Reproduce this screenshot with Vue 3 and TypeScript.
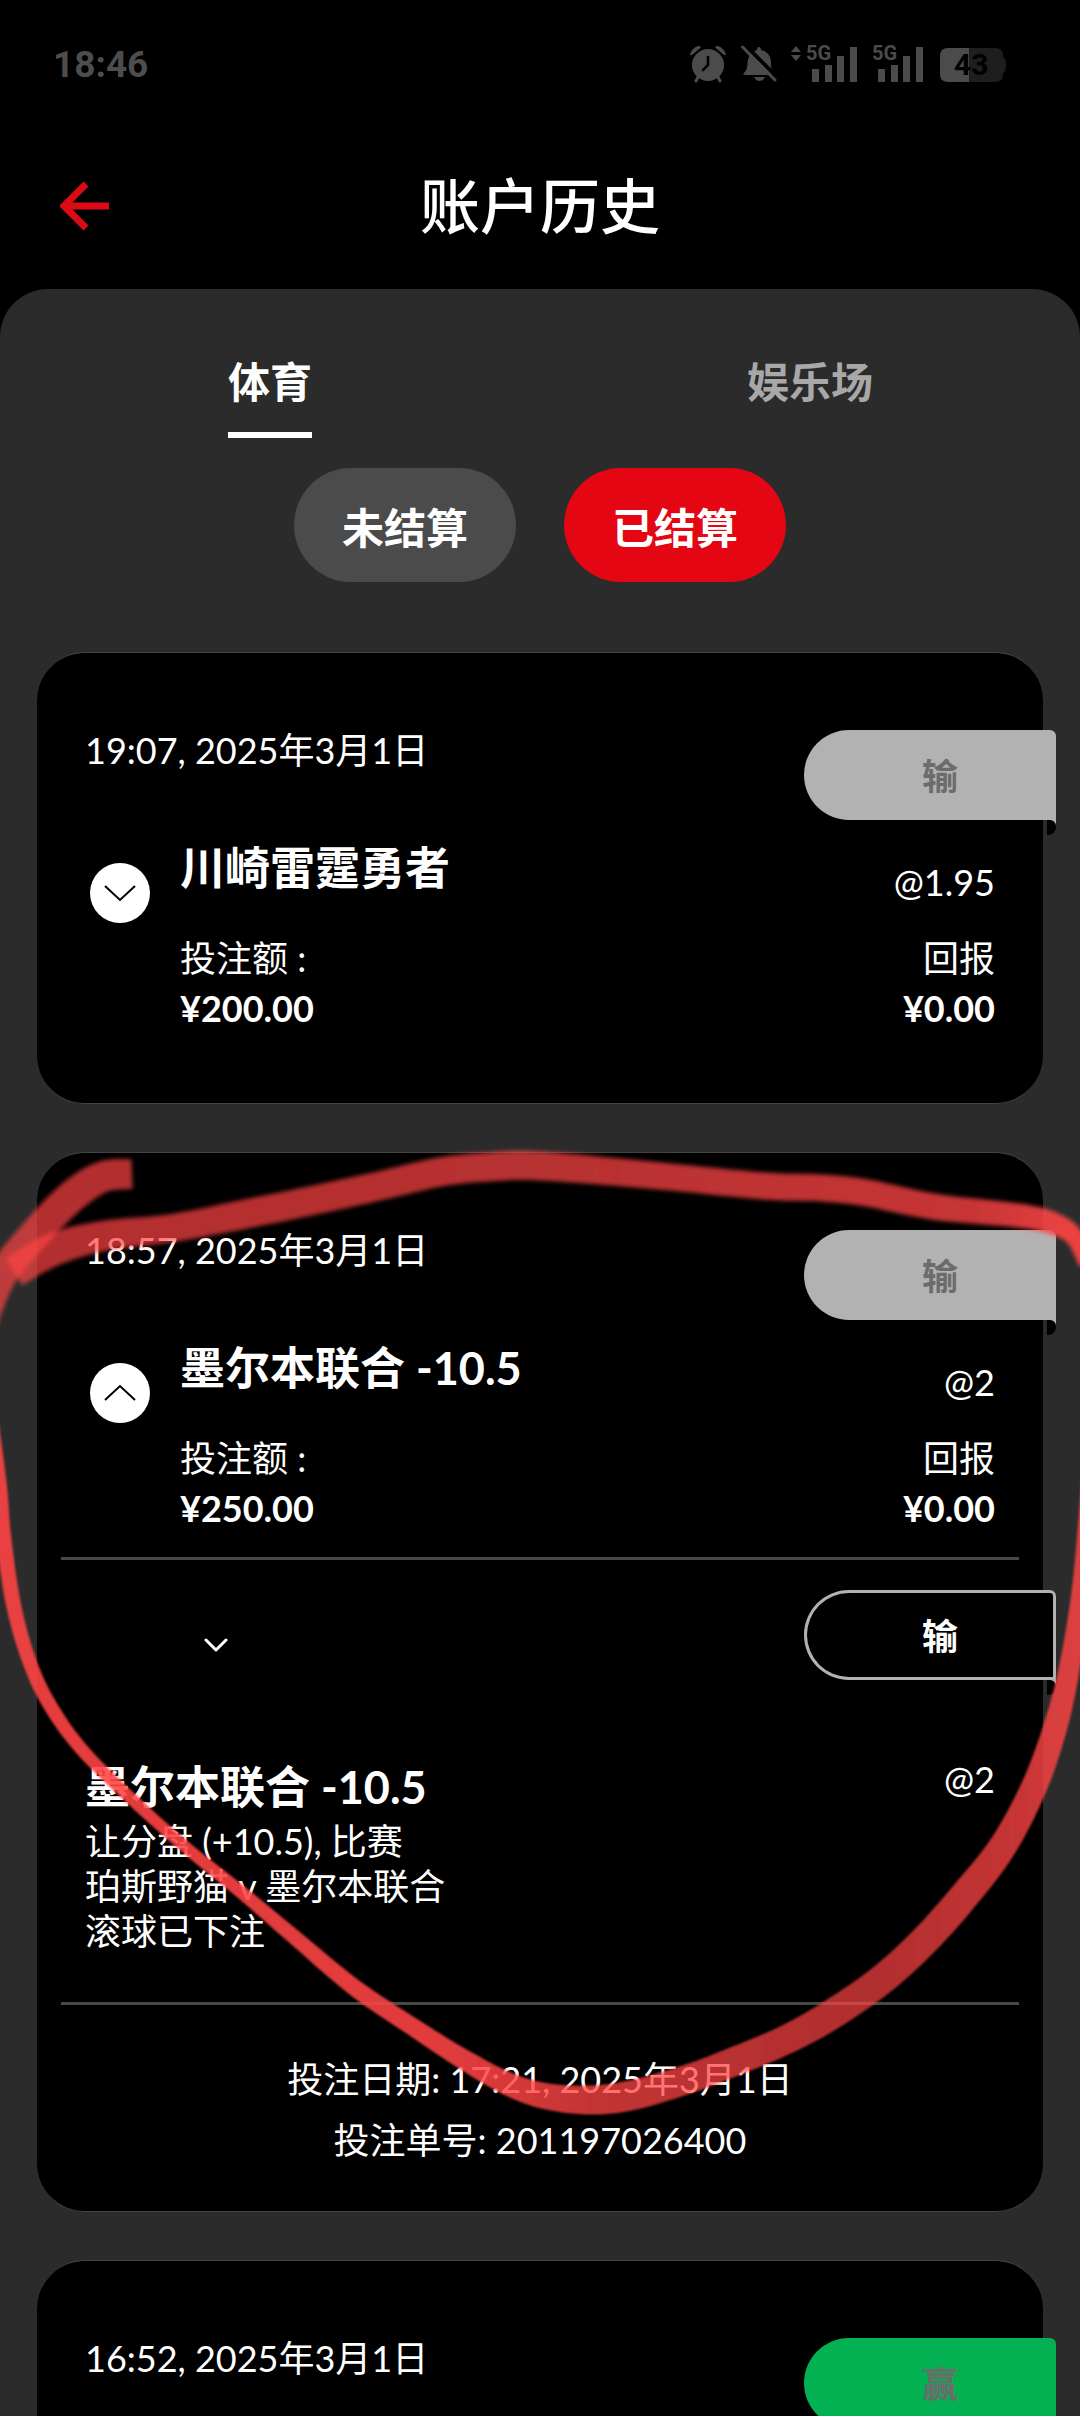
<script setup lang="ts">
import { ref } from 'vue'

interface BetDetail {
  name: string
  odds: string
  lines: string[]
  placed: string
  betId: string
}

interface Bet {
  date: string
  result: string
  tone: 'lost' | 'won'
  name?: string
  odds?: string
  stake?: string
  returns?: string
  open?: boolean
  marked?: boolean
  detail?: BetDetail
}

const tabs = ['体育', '娱乐场']
const filters = ['未结算', '已结算']
const activeTab = ref(0)
const activeFilter = ref(1)

const bets = ref<Bet[]>([
  {
    date: '19:07, 2025年3月1日',
    result: '输',
    tone: 'lost',
    name: '川崎雷霆勇者',
    odds: '@1.95',
    stake: '¥200.00',
    returns: '¥0.00',
  },
  {
    date: '18:57, 2025年3月1日',
    result: '输',
    tone: 'lost',
    name: '墨尔本联合 -10.5',
    odds: '@2',
    stake: '¥250.00',
    returns: '¥0.00',
    open: true,
    marked: true,
    detail: {
      name: '墨尔本联合 -10.5',
      odds: '@2',
      lines: ['让分盘 (+10.5), 比赛', '珀斯野猫 v 墨尔本联合', '滚球已下注'],
      placed: '17:21, 2025年3月1日',
      betId: '201197026400',
    },
  },
  { date: '16:52, 2025年3月1日', result: '赢', tone: 'won' },
])

// A pen sample: x, y and the stroke's thickness there.
type Sample = [number, number, number]

const tail: Sample[] = [
  [132, 1174, 30], [102, 1177, 31], [70, 1198, 32], [33, 1236, 31], [4, 1272, 30], [-9, 1303, 27], [-18, 1335, 24],
]
const over: Sample[] = [
  [14, 1272, 31], [52, 1250, 33], [103, 1236, 30], [172, 1228, 28], [241, 1215, 29], [310, 1201, 29],
  [379, 1186, 29], [440, 1172, 29], [489, 1167, 29], [540, 1166, 29], [660, 1176, 27], [764, 1186, 27],
  [822, 1188, 27], [867, 1193, 27], [936, 1207, 26], [1022, 1216, 24], [1057, 1225, 22], [1075, 1238, 18],
  [1086, 1264, 14],
]
const under: Sample[] = [
  [-8, 1425, 14], [0, 1487, 14], [4, 1540, 15], [14, 1607, 15], [30, 1663, 14], [51, 1707, 14], [84, 1752, 13],
  [138, 1805, 12], [189, 1850, 12], [241, 1892, 13], [293, 1936, 15], [355, 1988, 17], [413, 2027, 18],
  [458, 2056, 20], [506, 2083, 23], [545, 2096, 26], [590, 2100, 29], [633, 2095, 30], [691, 2078, 29],
  [733, 2062, 29], [781, 2042, 29], [826, 2018, 30], [880, 1981, 30], [925, 1940, 30], [965, 1895, 30],
  [1003, 1846, 28], [1034, 1787, 26], [1055, 1728, 24], [1069, 1670, 21], [1081, 1592, 19], [1088, 1500, 16],
  [1089, 1440, 12],
]

/** Runs a Catmull-Rom spline through the samples and returns the outline of the ribbon round it. */
function ribbon(points: Sample[]): string {
  const line: Sample[] = []
  const steps = 8
  for (let i = 0; i < points.length - 1; i++) {
    const p = [points[Math.max(i - 1, 0)], points[i], points[i + 1], points[Math.min(i + 2, points.length - 1)]]
    for (let s = 0; s < steps; s++) {
      const t = s / steps
      line.push(
        [0, 1, 2].map(
          (k) =>
            0.5 *
            (2 * p[1][k] +
              (p[2][k] - p[0][k]) * t +
              (2 * p[0][k] - 5 * p[1][k] + 4 * p[2][k] - p[3][k]) * t * t +
              (3 * p[1][k] - p[0][k] - 3 * p[2][k] + p[3][k]) * t * t * t),
        ) as Sample,
      )
    }
  }
  line.push(points[points.length - 1])
  const a: string[] = []
  const b: string[] = []
  line.forEach(([x, y, w], i) => {
    const from = line[Math.max(i - 1, 0)]
    const to = line[Math.min(i + 1, line.length - 1)]
    const dx = to[0] - from[0]
    const dy = to[1] - from[1]
    const r = w / 2 / (Math.hypot(dx, dy) || 1)
    a.push(`${(x - dy * r).toFixed(1)} ${(y + dx * r).toFixed(1)}`)
    b.unshift(`${(x + dy * r).toFixed(1)} ${(y - dx * r).toFixed(1)}`)
  })
  return `M${a.concat(b).join('L')}Z`
}

const tailPath = ribbon(tail)
const overPath = ribbon(over)
const underPath = ribbon(under)
</script>

<template>
  <div class="screen">
    <div class="status">
      <span class="clock">18:46</span>
      <div class="status-icons">
        <svg class="alarm" width="38" height="38" viewBox="0 0 38 38">
          <circle cx="19" cy="20" r="16" fill="#4b4b4b" />
          <path d="M1 9.500A13 13 0 0 1 9 1Q11.500 .5 12 2.500L3.500 9.500Q1.500 11 1 9.500ZM37 9.500A13 13 0 0 0 29 1Q26.500 .5 26 2.500L34.500 9.500Q36.500 11 37 9.500Z" fill="#4b4b4b" />
          <path d="M9 32l-2 4M29 32l2 4" stroke="#4b4b4b" stroke-width="3" stroke-linecap="round" />
          <path d="M19 12v8l-5 5" fill="none" stroke="#000" stroke-width="2.500" stroke-linecap="round" />
        </svg>
        <svg class="bell" width="36" height="38" viewBox="0 0 36 38">
          <path d="M18 2q2 0 2 3c7 2 10 6 10 13 0 6 1 9 4 12H4c-2 0-2-1-1-2 4-4 3-8 4-13Q8 7 16 5q0-3 2-3Z" fill="#4b4b4b" />
          <path d="M13 32h11q-2 4-5.500 4T13 32Z" fill="#4b4b4b" />
          <path d="M3 -1L38 34" stroke="#000" stroke-width="4" />
          <path d="M1.500 2L34 35" stroke="#4b4b4b" stroke-width="3" stroke-linecap="round" />
        </svg>
        <svg class="signal" width="67" height="54" viewBox="0 -8 67 54">
          <path d="M0 7l5-6 5 6ZM0 10h10l-5 6Z" fill="#4b4b4b" />
          <text x="15" y="15" class="net">5G</text>
          <path d="M21 24h7v13h-7ZM34 20h7v17h-7ZM46 11h7v26h-7ZM59 2h7v35h-7Z" fill="#4b4b4b" />
        </svg>
        <svg class="signal" width="52" height="54" viewBox="0 -8 52 54">
          <text x="0" y="15" class="net">5G</text>
          <path d="M6 24h7v13H6ZM19 20h7v17h-7ZM31 11h7v26h-7ZM44 2h7v35h-7Z" fill="#4b4b4b" />
        </svg>
        <svg class="battery" width="66" height="38" viewBox="0 0 66 38">
          <path d="M29 3h26q8 0 8 8v1q3 1 3 8t-3 8v1q0 8-8 8H29Z" fill="#1e1e1e" />
          <path d="M29 3H8Q0 3 0 11v18q0 8 8 8h21Z" fill="#4b4b4b" />
          <text x="14" y="30" class="level">43</text>
        </svg>
      </div>
    </div>

    <header class="top">
      <button class="back" aria-label="返回">
        <svg width="50" height="50" viewBox="0 0 50 50">
          <path d="M49 25H7M26 3L4 25l22 22" fill="none" stroke="#db0a15" stroke-width="7" />
        </svg>
      </button>
      <h1>账户历史</h1>
    </header>

    <main class="panel">
      <nav class="tabs">
        <button
          v-for="(tab, i) in tabs"
          :key="tab"
          class="tab"
          :class="{ active: i === activeTab }"
          @click="activeTab = i"
        >
          <span>{{ tab }}</span>
        </button>
      </nav>
      <div class="filters">
        <button
          v-for="(item, i) in filters"
          :key="item"
          class="pill"
          :class="{ active: i === activeFilter }"
          @click="activeFilter = i"
        >
          {{ item }}
        </button>
      </div>

      <section class="list">
        <article v-for="bet in bets" :key="bet.date" class="card">
          <div class="head">
            <time>{{ bet.date }}</time>
            <span class="badge" :class="bet.tone">{{ bet.result }}</span>
          </div>
          <div v-if="bet.name" class="body" :class="{ open: bet.open }">
            <button class="toggle" aria-label="展开或收起" @click="bet.open = !bet.open">
              <svg width="32" height="18" viewBox="0 0 32 18">
                <path :d="bet.open ? 'M1 16L16 2l15 14' : 'M1 2l15 14L31 2'" fill="none" stroke="#000" stroke-width="2" />
              </svg>
            </button>
            <div class="left">
              <h2>{{ bet.name }}</h2>
              <div class="amount">投注额 :<strong>{{ bet.stake }}</strong></div>
            </div>
            <div class="right">
              <span class="odds">{{ bet.odds }}</span>
              <div class="amount">回报<strong>{{ bet.returns }}</strong></div>
            </div>
          </div>
          <template v-if="bet.open && bet.detail">
            <hr />
            <div class="leg-head">
              <button class="leg-toggle" aria-label="详情">
                <svg width="24" height="16" viewBox="0 0 24 16">
                  <path d="M2 2l10 10L22 2" fill="none" stroke="#fff" stroke-width="3" stroke-linecap="round" stroke-linejoin="round" />
                </svg>
              </button>
              <span class="badge outline">{{ bet.result }}</span>
            </div>
            <div class="leg">
              <div>
                <h2>{{ bet.detail.name }}</h2>
                <p v-for="line in bet.detail.lines" :key="line">{{ line }}</p>
              </div>
              <span class="odds">{{ bet.detail.odds }}</span>
            </div>
            <hr />
            <footer class="meta">
              <span>投注日期: {{ bet.detail.placed }}</span>
              <span>投注单号: {{ bet.detail.betId }}</span>
            </footer>
          </template>

          <!-- freehand marker ring around the bet -->
          <svg v-if="bet.marked" class="marker" viewBox="0 1152 1080 980" aria-hidden="true">
            <defs>
              <linearGradient id="ink-under" gradientUnits="userSpaceOnUse" x1="0" y1="0" x2="1080" y2="0">
                <stop offset="0" stop-color="#ff4444" stop-opacity=".9" />
                <stop offset=".42" stop-color="#ff4444" stop-opacity=".88" />
                <stop offset=".56" stop-color="#ff4444" stop-opacity=".76" />
                <stop offset=".8" stop-color="#ff4444" stop-opacity=".69" />
                <stop offset=".92" stop-color="#ff4444" stop-opacity=".76" />
                <stop offset="1" stop-color="#ff4444" stop-opacity=".84" />
              </linearGradient>
              <linearGradient id="ink-over" gradientUnits="userSpaceOnUse" x1="0" y1="0" x2="1080" y2="0">
                <stop offset="0" stop-color="#ff4444" stop-opacity=".7" />
                <stop offset=".5" stop-color="#ff4444" stop-opacity=".72" />
                <stop offset=".9" stop-color="#ff4444" stop-opacity=".78" />
                <stop offset="1" stop-color="#ff4444" stop-opacity=".92" />
              </linearGradient>
              <filter id="soft" x="-5%" y="-5%" width="110%" height="110%">
                <feGaussianBlur stdDeviation="2" />
              </filter>
              <filter id="crisp" x="-5%" y="-5%" width="110%" height="110%">
                <feGaussianBlur stdDeviation="1" />
              </filter>
            </defs>
            <path :d="tailPath" fill="#ff4444" fill-opacity=".7" filter="url(#soft)" />
            <path :d="overPath" fill="url(#ink-over)" filter="url(#soft)" />
            <path :d="underPath" fill="url(#ink-under)" filter="url(#crisp)" />
          </svg>
        </article>
      </section>
    </main>
  </div>
</template>

<style>
html,
body {
  background: #000;
}
body {
  margin: 0;
}
</style>

<style scoped>
.screen {
  display: flex;
  flex-direction: column;
  height: 100vh;
  overflow: hidden;
  background: #000;
  color: #fff;
  font-family: Lato, 'Noto Sans CJK SC', sans-serif;
  font-size: 36px;
}
button {
  padding: 0;
  border: 0;
  background: none;
  color: inherit;
  font: inherit;
  cursor: pointer;
}
svg {
  display: block;
}
h1,
h2,
p {
  margin: 0;
}
.status {
  display: flex;
  flex: none;
  align-items: center;
  justify-content: space-between;
  height: 128px;
  padding: 0 74px 0 53px;
  font-family: Roboto, sans-serif;
  font-weight: 700;
}
.clock {
  color: #4d4d4d;
  font-size: 37px;
}
.status-icons {
  display: flex;
  align-items: center;
}
.bell,
.signal {
  margin-left: 14px;
}
.battery {
  margin-left: 16px;
}
.net {
  fill: #4b4b4b;
  font-size: 20px;
}
.level {
  fill: #000;
  font-size: 30px;
}
.top {
  display: grid;
  flex: none;
  box-sizing: border-box;
  grid-template-columns: 1fr auto 1fr;
  align-items: center;
  height: 161px;
  padding: 0 60px 6px;
}
.back {
  width: 50px;
  height: 50px;
}
h1 {
  font-size: 60px;
  font-weight: 500;
  line-height: 80px;
}
.panel {
  flex: 1;
  min-height: 0;
  overflow: hidden;
  border-radius: 48px 48px 0 0;
  background: #2b2b2b;
}
.tabs {
  display: flex;
  padding-top: 63px;
}
.tab {
  flex: 1;
  color: #a8a8a8;
  font-size: 42px;
  font-weight: 700;
  line-height: 60px;
}
.tab span {
  display: inline-block;
  padding-bottom: 20px;
  border-bottom: 6px solid transparent;
}
.tab.active {
  color: #fff;
}
.tab.active span {
  border-color: #fff;
}
.filters {
  display: flex;
  justify-content: center;
  gap: 48px;
  margin-top: 30px;
}
.pill {
  padding: 30px 48px 24px;
  border-radius: 57px;
  background: #4b4b4b;
  font-size: 42px;
  font-weight: 700;
  line-height: 60px;
}
.pill.active {
  background: #e40612;
}
.list {
  display: flex;
  flex-direction: column;
  gap: 48px;
  padding: 70px 37px 48px;
}
.card {
  position: relative;
  min-height: 450px;
  border: solid #444;
  border-width: 1px 0;
  border-radius: 48px;
  background: #000;
}
.head,
.leg-head {
  display: flex;
  align-items: flex-start;
  justify-content: space-between;
  margin-right: -13px;
  padding-left: 48px;
}
.head {
  padding-top: 77px;
}
.head time {
  line-height: 40px;
}
.badge {
  position: relative;
  box-sizing: border-box;
  width: 252px;
  height: 90px;
  padding-left: 20px;
  border-radius: 45px 6px 0 45px;
  background: #b2b2b2;
  color: #6c6c6c;
  font-weight: 700;
  line-height: 92px;
  text-align: center;
}
.badge::before,
.badge::after {
  position: absolute;
  top: 100%;
  right: 0;
  width: 9px;
  height: 6px;
  background: #b2b2b2;
  content: '';
}
.badge::after {
  height: 15px;
  border-radius: 0 6px 8px 0;
  background: #000;
}
.badge.won {
  background: #03b153;
}
.badge.won::before {
  background: #03b153;
}
.badge.outline {
  background: #000;
  box-shadow: inset 0 0 0 3px #b2b2b2;
  color: #fff;
}
.body {
  display: flex;
  padding: 21px 48px 70px;
}
.body.open {
  padding-bottom: 24px;
}
.toggle {
  display: flex;
  flex: none;
  align-items: center;
  justify-content: center;
  width: 60px;
  height: 60px;
  margin: 22px 30px 0 5px;
  border-radius: 50%;
  background: #fff;
}
.left,
.right {
  display: flex;
  flex-direction: column;
  justify-content: space-between;
}
.left {
  flex: 1;
  gap: 38px;
}
.right {
  padding-top: 14px;
  text-align: right;
}
h2 {
  font-size: 45px;
  font-weight: 700;
  line-height: 54px;
}
.odds {
  line-height: 54px;
}
.amount {
  line-height: 50px;
}
.amount strong {
  display: block;
}
hr {
  height: 3px;
  margin: 0 24px;
  border: 0;
  background: #484848;
}
.leg-head {
  padding-top: 30px;
}
.leg-toggle {
  display: flex;
  align-items: center;
  justify-content: center;
  width: 40px;
  height: 40px;
  margin: 36px 0 0 111px;
}
.leg {
  display: flex;
  justify-content: space-between;
  padding: 80px 48px 48px;
}
.leg p {
  line-height: 45px;
}
.leg h2 {
  margin-bottom: 5px;
}
.leg .odds {
  line-height: 38px;
}
.meta {
  display: flex;
  flex-direction: column;
  align-items: center;
  padding: 44px 48px 40px;
  line-height: 61px;
}
.marker {
  position: absolute;
  top: -1px;
  left: -37px;
  width: calc(100% + 74px);
  overflow: visible;
  pointer-events: none;
}
</style>
